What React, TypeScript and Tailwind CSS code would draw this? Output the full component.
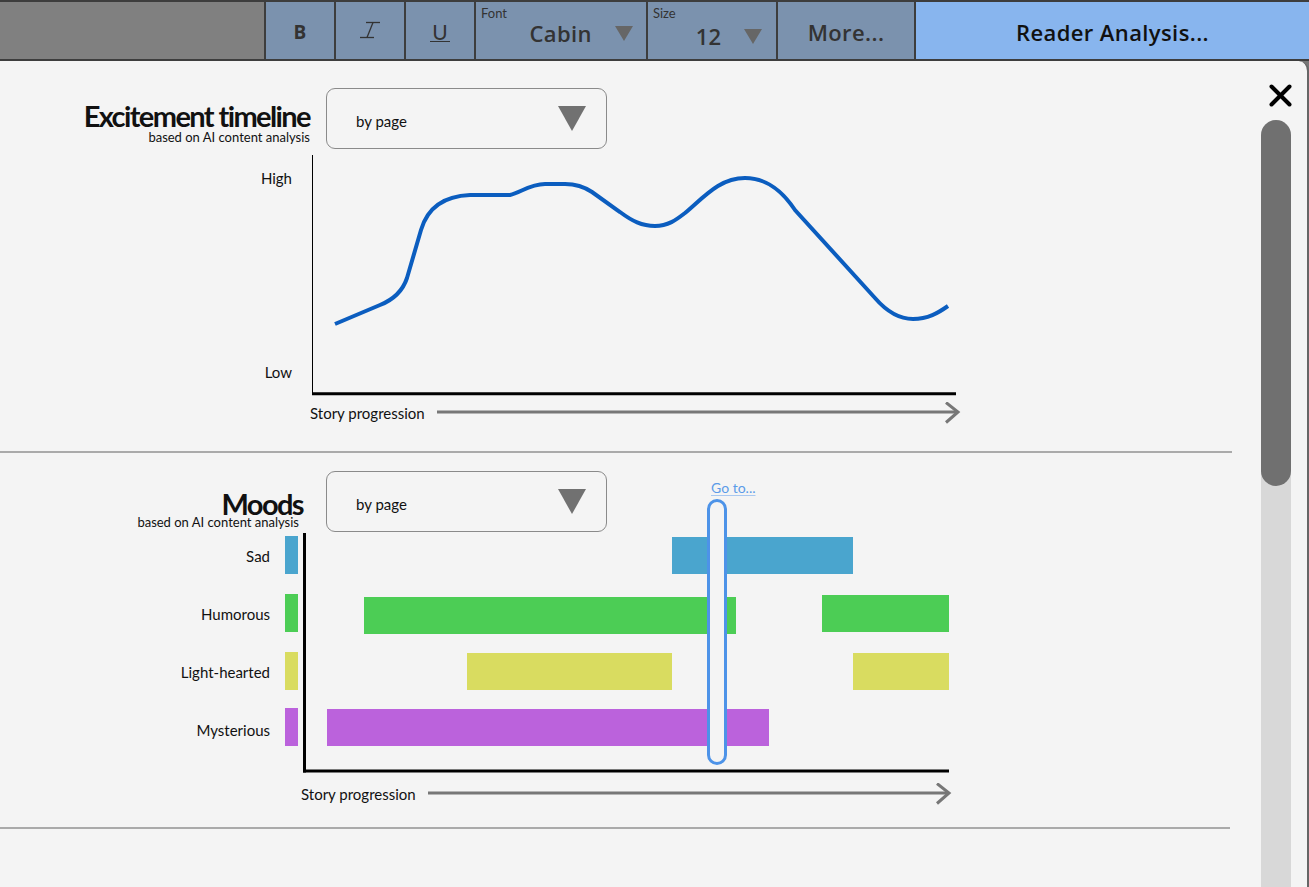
import React from "react";

function Tri({ w, h, color }: { w: number; h: number; color: string }) {
  return (
    <svg width={w} height={h} viewBox={`0 0 ${w} ${h}`}>
      <polygon points={`0,0 ${w},0 ${w / 2},${h}`} fill={color} />
    </svg>
  );
}

function Dropdown() {
  return (
    <div className="flex h-[61px] w-[281px] items-center justify-between rounded-[9px] border border-[#8a8a8a] pl-[29px] pr-[20px]">
      <span className="mt-[4px] text-[15px] leading-[18px] text-[#111]">by page</span>
      <Tri w={28} h={25} color="#717171" />
    </div>
  );
}

function Toolbar() {
  return (
    <header className="flex h-[61px] border-y-2 border-[#3d3d3d] text-[#333]">
      <div className="w-[264px] bg-[#808080]" />
      <div className="flex w-[70px] items-center justify-center border-l-2 border-[#3d3d3d] bg-[#7b92ae] pt-[2px]">
        <span className="font-['Open_Sans',sans-serif] text-[19px] font-bold leading-[20px]">B</span>
      </div>
      <div className="flex w-[70px] items-center justify-center border-l-2 border-[#3d3d3d] bg-[#7b92ae]">
        <svg width="24" height="20" viewBox="0 0 24 20">
          <line x1="8" y1="1.5" x2="22" y2="1.5" stroke="#333" strokeWidth="1.3" />
          <line x1="2" y1="16.5" x2="16" y2="16.5" stroke="#333" strokeWidth="1.3" />
          <line x1="15" y1="1.5" x2="9" y2="16.5" stroke="#333" strokeWidth="1.3" />
        </svg>
      </div>
      <div className="flex w-[70px] items-center justify-center border-l-2 border-[#3d3d3d] bg-[#7b92ae] pt-[2px]">
        <span className="border-b-[1.5px] border-[#333] px-[2px] text-[21px] leading-[19px]">U</span>
      </div>
      <div className="flex w-[172px] flex-col border-l-2 border-[#3d3d3d] bg-[#7b92ae]">
        <span className="pl-[5px] pt-[4px] text-[13px] leading-[14px]">Font</span>
        <div className="flex items-center justify-end pr-[13px]">
          <span className="mr-[23px] font-['Open_Sans',sans-serif] text-[22px] font-semibold leading-[26px] tracking-[0.4px]">Cabin</span>
          <Tri w={18} h={15} color="#666" />
        </div>
      </div>
      <div className="flex w-[130px] flex-col border-l-2 border-[#3d3d3d] bg-[#7b92ae]">
        <span className="pl-[5px] pt-[4px] text-[13px] leading-[14px]">Size</span>
        <div className="flex items-center justify-end pr-[14px] pt-[3px]">
          <span className="mr-[23px] font-['Open_Sans',sans-serif] text-[22px] font-semibold leading-[26px]">12</span>
          <Tri w={18} h={15} color="#666" />
        </div>
      </div>
      <div className="flex w-[138px] items-center justify-center border-l-2 border-[#3d3d3d] bg-[#7b92ae] pt-[3px]">
        <span className="font-['Open_Sans',sans-serif] text-[22px] font-semibold leading-[24px] tracking-[0.4px]">More...</span>
      </div>
      <div className="flex flex-1 items-center justify-center border-l-2 border-[#3d3d3d] bg-[#88b5ee] pt-[3px]">
        <span className="font-['Open_Sans',sans-serif] text-[22px] font-semibold leading-[24px] tracking-[0.4px] text-[#111]">Reader Analysis...</span>
      </div>
    </header>
  );
}

function Arrow({ x, y }: { x: number; y: number }) {
  const w = 524;
  return (
    <svg width={w} height={22} viewBox={`${x} ${y} ${w} 22`}>
      <line x1={x} y1={y + 10} x2={x + w - 3} y2={y + 10} stroke="#777" strokeWidth="3" />
      <polyline
        points={`${x + w - 15},${y + 0.5} ${x + w - 3},${y + 10} ${x + w - 15},${y + 20.5}`}
        fill="none"
        stroke="#777"
        strokeWidth="3"
      />
    </svg>
  );
}

function Excitement() {
  return (
    <section className="h-[390px] pt-[27px]">
      <div className="flex">
        <div className="flex w-[310px] flex-col items-end pt-[15px]">
          <h2 className="text-[29px] font-bold leading-[25px] tracking-[-1.6px] text-[#111]">Excitement timeline</h2>
          <span className="mt-[2px] text-[13px] leading-[14px] text-[#111]">based on AI content analysis</span>
        </div>
        <div className="ml-[16px]">
          <Dropdown />
        </div>
      </div>
      <div className="mt-[6px] flex">
        <div className="flex h-[242px] w-[312px] flex-col items-end justify-between pb-[16px] pr-[20px] pt-[14px] text-[15px] leading-[18px] text-[#111]">
          <span>High</span>
          <span>Low</span>
        </div>
        <svg width="650" height="242" viewBox="312 155 650 242">
          <line x1="311.5" y1="155" x2="311.5" y2="395" stroke="#000" strokeWidth="3" />
          <line x1="310" y1="393.7" x2="956" y2="393.7" stroke="#000" strokeWidth="3" />
          <path
            d="M335,324 L380,305 C395,299 403,290 407,278 L421,230 C428,206 445,196 470,195 L510,195 C520,193 530,184 545,184 L565,184 C578,184 586,188 592,192 L620,212 C632,221 642,226 655,226 C668,226 676,220 685,213 C705,196 720,178 745,178 C770,178 785,195 795,210 L875,298 C888,313 900,319 913,319 C928,319 938,313 948,306"
            fill="none"
            stroke="#0b5dbf"
            strokeWidth="4"
          />
        </svg>
      </div>
      <div className="mt-[5px] flex h-[22px] items-center pl-[310px]">
        <span className="w-[127px] text-[15px] leading-[18px] text-[#111]">Story progression</span>
        <Arrow x={437} y={402} />
      </div>
    </section>
  );
}

const moods = [
  { label: "Sad", color: "#4aa5ce" },
  { label: "Humorous", color: "#4ccd55" },
  { label: "Light-hearted", color: "#d9dc60" },
  { label: "Mysterious", color: "#bb62dc" },
];

const bars = [
  { x: 672, w: 181, y: 537, c: "#4aa5ce" },
  { x: 364, w: 372, y: 597, c: "#4ccd55" },
  { x: 822, w: 127, y: 595, c: "#4ccd55" },
  { x: 467, w: 205, y: 653, c: "#d9dc60" },
  { x: 853, w: 96, y: 653, c: "#d9dc60" },
  { x: 327, w: 442, y: 709, c: "#bb62dc" },
];

function Moods() {
  const swatchY = [536, 594, 652, 708];
  return (
    <section className="relative h-[374px] pt-[18px]">
      <div className="flex">
        <div className="flex w-[303px] flex-col items-end pt-[20px]">
          <h2 className="text-[29px] font-bold leading-[25px] tracking-[-1.6px] text-[#111]">Moods</h2>
          <span className="pr-[4px] text-[13px] leading-[13px] text-[#111]">based on AI content analysis</span>
        </div>
        <div className="ml-[23px]">
          <Dropdown />
        </div>
      </div>
      <div className="mt-[1px] flex">
        <div className="flex h-[240px] w-[283px] flex-col items-end gap-[40px] pr-[13px] pt-[14px] text-[15px] leading-[18px] text-[#111]">
          {moods.map((m) => (
            <span key={m.label}>{m.label}</span>
          ))}
        </div>
        <svg width="669" height="240" viewBox="283 533 669 240">
          {moods.map((m, i) => (
            <rect key={m.label} x="285" y={swatchY[i]} width="13" height="38" fill={m.color} />
          ))}
          {bars.map((b, i) => (
            <rect key={i} x={b.x} y={b.y} width={b.w} height="37" fill={b.c} />
          ))}
          <line x1="304.5" y1="533" x2="304.5" y2="772.5" stroke="#000" strokeWidth="3" />
          <line x1="303" y1="771" x2="949" y2="771" stroke="#000" strokeWidth="3" />
        </svg>
      </div>
      <div className="mt-[10px] flex h-[22px] items-center pl-[301px]">
        <span className="w-[127px] text-[15px] leading-[18px] text-[#111]">Story progression</span>
        <Arrow x={428} y={783} />
      </div>
      <a className="absolute left-[711px] top-[27px] text-[14px] leading-[16px] text-[#5b9be8] underline decoration-[#a9c8f0] underline-offset-[2px]">
        Go to...
      </a>
      <div className="absolute left-[707px] top-[46px] h-[266px] w-[20px] rounded-full border-[3px] border-[#4d93e8] bg-[#f4f4f4]" />
    </section>
  );
}

export default function App() {
  return (
    <div className="h-[887px] w-[1309px] overflow-hidden bg-[#777] font-['Lato',sans-serif]">
      <Toolbar />
      <div className="flex h-[826px] rounded-tr-[10px] border-r-2 border-[#666] bg-[#f4f4f4]">
        <main className="w-[1232px]">
          <Excitement />
          <div className="h-[2px] bg-[#aaa]" />
          <Moods />
          <div className="mr-[2px] h-[2px] bg-[#aaa]" />
        </main>
        <aside className="flex flex-1 flex-col">
          <svg className="ml-[37px] mt-[23px]" width="23" height="23" viewBox="0 0 23 23">
            <line x1="2.5" y1="2.5" x2="20.5" y2="20.5" stroke="#000" strokeWidth="4" strokeLinecap="round" />
            <line x1="20.5" y1="2.5" x2="2.5" y2="20.5" stroke="#000" strokeWidth="4" strokeLinecap="round" />
          </svg>
          <div className="ml-[29px] mt-[13px] w-[30px] flex-1 rounded-t-full bg-[#d8d8d8]">
            <div className="h-[366px] rounded-full bg-[#707070]" />
          </div>
        </aside>
      </div>
    </div>
  );
}
